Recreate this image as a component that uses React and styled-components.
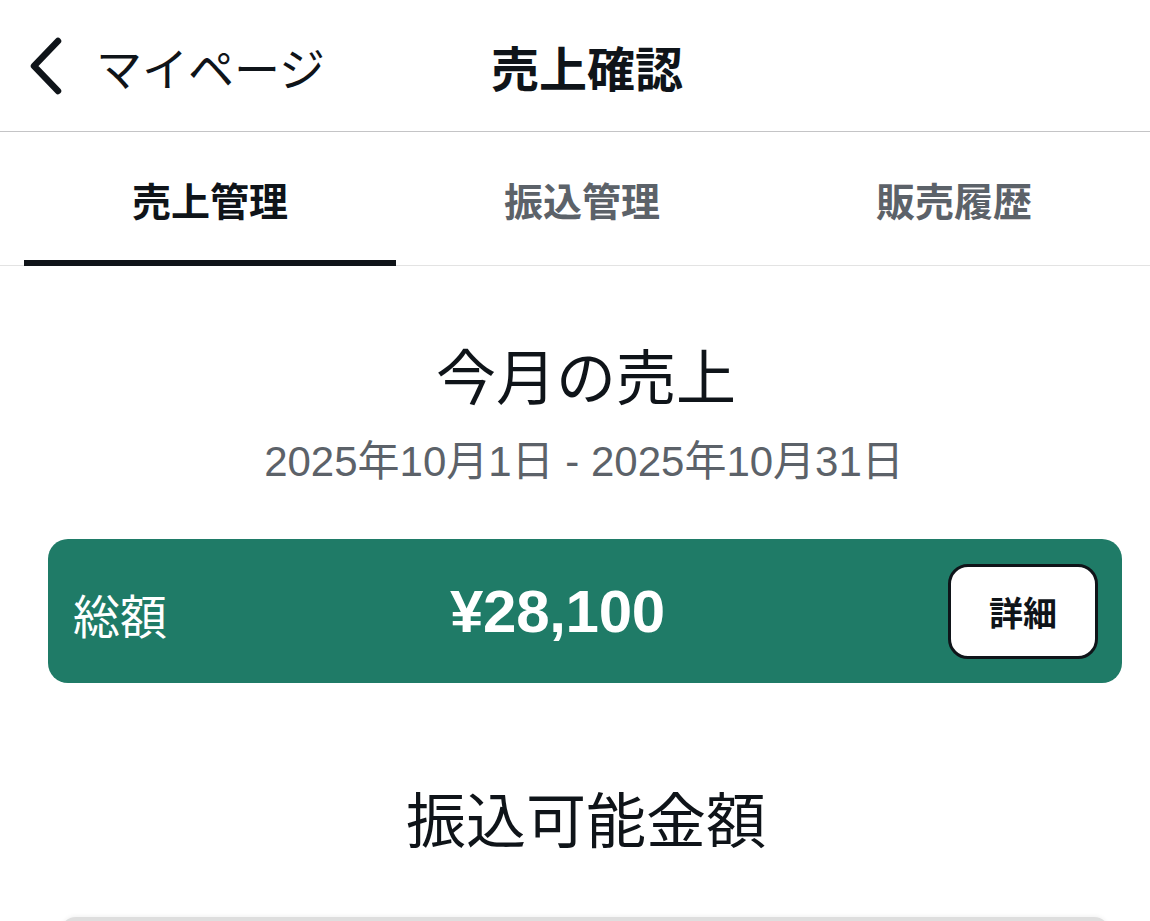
import React, { useState } from "react";
import styled, { createGlobalStyle } from "styled-components";

const Global = createGlobalStyle`
  html, body { margin: 0; padding: 0; background: #ffffff; }
  body {
    font-family: "Liberation Sans", "Noto Sans CJK JP", sans-serif;
    color: #0f1419;
    overflow: hidden;
  }
`;

const Page = styled.div`
  width: 1150px;
  height: 921px;
  overflow: hidden;
  display: flex;
  flex-direction: column;
`;

const Header = styled.header`
  height: 131px;
  display: flex;
  align-items: center;
  padding-left: 26px;
  border-bottom: 1.5px solid #c4c4c6;
  flex-shrink: 0;
`;

const BackButton = styled.button`
  display: flex;
  align-items: center;
  gap: 30px;
  background: none;
  border: 0;
  padding: 0;
  font: inherit;
  color: #0f1419;
  font-size: 46px;
  cursor: pointer;
  letter-spacing: 0;
`;

const Title = styled.h1`
  margin: 0 0 0 166px;
  font-size: 48px;
  font-weight: 700;
  letter-spacing: 0;
`;

const Tabs = styled.nav`
  display: flex;
  height: 133px;
  padding: 0 10px 0 24px;
  border-bottom: 1px solid #e3e3e3;
  flex-shrink: 0;
`;

const Tab = styled.button`
  flex: 1;
  position: relative;
  background: none;
  border: 0;
  font: inherit;
  font-size: 39px;
  font-weight: 700;
  color: ${(p) => (p.$active ? "#0f1419" : "#5c6269")};
  cursor: pointer;
  padding: 0;
  &::after {
    content: "";
    position: absolute;
    left: 0;
    right: 0;
    bottom: -1px;
    height: 6px;
    background: ${(p) => (p.$active ? "#0f1419" : "transparent")};
  }
`;

const Section = styled.section`
  display: flex;
  flex-direction: column;
  align-items: center;
  padding-top: 78px;
`;

const Heading = styled.h2`
  margin: 0;
  font-size: 60px;
  line-height: 72px;
  font-weight: 400;
  text-align: center;
  padding-left: 22px;
`;

const Period = styled.p`
  margin: 22px 0 0;
  font-size: 42px;
  line-height: 48px;
  color: #5c6269;
  padding-left: 18px;
`;

const TotalCard = styled.div`
  align-self: stretch;
  margin: 53px 28px 0 48px;
  height: 144px;
  background: #1f7b67;
  border-radius: 20px;
  display: flex;
  align-items: center;
  padding: 0 24px 0 25px;
  color: #ffffff;
`;

const Label = styled.span`
  flex: 0 0 377px;
  font-size: 47px;
  padding-top: 4px;
`;

const Amount = styled.span`
  font-size: 60px;
  font-weight: 700;
  letter-spacing: -0.3px;
`;

const DetailButton = styled.button`
  margin-left: auto;
  width: 150px;
  height: 95px;
  background: #ffffff;
  border: 3px solid #0f1419;
  border-radius: 20px;
  font: inherit;
  font-size: 34px;
  font-weight: 700;
  color: #0f1419;
  cursor: pointer;
`;

const SecondHeading = styled(Heading)`
  margin-top: 104px;
`;

const BottomCard = styled.div`
  align-self: stretch;
  margin: 58px 40px 0 60px;
  height: 60px;
  background: #dedede;
  border-radius: 16px;
  box-shadow: 0 -1px 4px rgba(0, 0, 0, 0.06);
`;

function Chevron() {
  return (
    <svg width="40" height="60" viewBox="0 0 40 60" fill="none">
      <path
        d="M32 5 L8 30 L32 55"
        stroke="#0f1419"
        strokeWidth="6.5"
        strokeLinecap="round"
        strokeLinejoin="round"
      />
    </svg>
  );
}

export default function App() {
  const [tab, setTab] = useState(0);
  const tabs = ["売上管理", "振込管理", "販売履歴"];
  return (
    <Page>
      <Global />
      <Header>
        <BackButton>
          <Chevron />
          <span>マイページ</span>
        </BackButton>
        <Title>売上確認</Title>
      </Header>
      <Tabs>
        {tabs.map((t, i) => (
          <Tab key={t} $active={i === tab} onClick={() => setTab(i)}>
            {t}
          </Tab>
        ))}
      </Tabs>
      <Section>
        <Heading>今月の売上</Heading>
        <Period>2025年10月1日 - 2025年10月31日</Period>
        <TotalCard>
          <Label>総額</Label>
          <Amount>¥28,100</Amount>
          <DetailButton>詳細</DetailButton>
        </TotalCard>
        <SecondHeading>振込可能金額</SecondHeading>
        <BottomCard />
      </Section>
    </Page>
  );
}
